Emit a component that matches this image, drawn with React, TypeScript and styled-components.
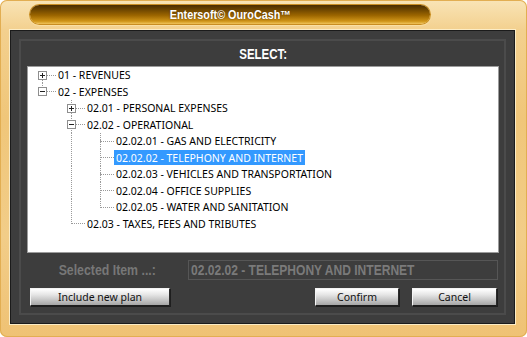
import React from 'react';
import styled, { createGlobalStyle } from 'styled-components';

const GlobalStyle = createGlobalStyle`
  html, body {
    margin: 0;
    padding: 0;
    background: #fff;
  }
`;

const narrow = `"Liberation Sans", Arial, sans-serif`;
const uiFont = `"Noto Sans", "Open Sans", sans-serif`;

const Frame = styled.div`
  width: 527px;
  height: 337px;
  box-sizing: border-box;
  border-radius: 7px;
  padding: 0 12px 13px 10px;
  display: flex;
  flex-direction: column;
  background: linear-gradient(
    180deg,
    #f9e4b6 0%,
    #f3d08e 9%,
    #f0c679 35%,
    #f2cd88 70%,
    #efc274 100%
  );
  box-shadow: inset 0 0 0 1px #e2ae52;
`;

const TitleRow = styled.div`
  height: 30px;
  display: flex;
  align-items: flex-start;
  padding: 5px 0 0 20px;
  box-sizing: border-box;
`;

const TitlePill = styled.div`
  width: 400px;
  height: 19px;
  border-radius: 10px;
  display: flex;
  align-items: center;
  justify-content: center;
  background: linear-gradient(
    180deg,
    #4a2c00 0%,
    #6e4600 25%,
    #9c6600 55%,
    #cf9418 85%,
    #f0c35a 100%
  );
  box-shadow: 0 0 0 1px #c98d22, 0 1px 1px 1px #fbe2a6;
  color: #fff;
  font: bold 12px ${narrow};
  text-shadow: 0 0 2px #5a3600;
`;

// the original uses a condensed face; squeeze Arial metrics to match
const Narrow = styled.span<{ $k: number; $left?: boolean }>`
  display: inline-block;
  white-space: nowrap;
  transform: scaleX(${(p) => p.$k});
  transform-origin: ${(p) => (p.$left ? 'left' : 'center')};
`;

const Panel = styled.div`
  flex: 1;
  background: #3d3d3d;
  border: 1px solid #1b1b1b;
  box-shadow: 0 0 0 1px #fbecc6;
  padding: 8px;
  display: flex;
`;

const Inner = styled.div`
  flex: 1;
  border: 2px solid #4b4b4b;
  padding: 0 5px 7px 6px;
  display: flex;
  flex-direction: column;
`;

const Heading = styled.div`
  height: 25px;
  display: flex;
  align-items: center;
  justify-content: center;
  color: #fff;
  font: bold 14px ${narrow};
`;

const TreeBox = styled.div`
  height: 187px;
  box-sizing: border-box;
  background: #fff;
  border: 1px solid #9c9c9c;
`;

const Row = styled.div`
  height: 16px;
  display: flex;
  align-items: center;
  &:nth-child(even) {
    height: 17px;
  }
`;

const dotV = 'repeating-linear-gradient(to bottom, #9a9a9a 0 1px, transparent 1px 2px)';
const dotH = 'repeating-linear-gradient(to right, #9a9a9a 0 1px, transparent 1px 2px)';

type CellProps = { $through?: boolean; $top?: boolean; $bottom?: boolean; $horiz?: boolean };

const lineLayers = (p: CellProps) => {
  const layers: string[] = [];
  if (p.$through) layers.push(`${dotV} 14px 0 / 1px 100% no-repeat`);
  if (p.$top) layers.push(`${dotV} 14px 0 / 1px 9px no-repeat`);
  if (p.$bottom) layers.push(`${dotV} 14px 100% / 1px 9px no-repeat`);
  if (p.$horiz) layers.push(`${dotH} 15px 8px / 14px 1px no-repeat`);
  return layers.length ? layers.join(', ') : 'none';
};

const Cell = styled.div<CellProps>`
  width: 29px;
  height: 100%;
  flex: none;
  display: flex;
  align-items: flex-start;
  padding: 4px 0 0 10px;
  box-sizing: border-box;
  background: ${(p) => lineLayers(p)};
`;

const Label = styled.span<{ $selected?: boolean }>`
  height: 15px;
  display: inline-flex;
  align-items: center;
  padding: 0 2px;
  margin-left: -1px;
  font: 10.5px ${uiFont};
  white-space: nowrap;
  color: ${(p) => (p.$selected ? '#fff' : '#000')};
  background: ${(p) => (p.$selected ? '#3399ff' : 'transparent')};
`;

const Expander = ({ open }: { open: boolean }) => (
  <svg width="9" height="9" viewBox="0 0 9 9" style={{ display: 'block', background: '#fff' }}>
    <rect x="0.5" y="0.5" width="8" height="8" fill="#fff" stroke="#8e8e8e" />
    <path d="M2 4.5h5" stroke="#222" />
    {!open && <path d="M4.5 2v5" stroke="#222" />}
  </svg>
);

const SelectedRow = styled.div`
  margin-top: 7px;
  height: 20px;
  display: flex;
  align-items: stretch;
`;

const FieldLabel = styled.div`
  width: 161px;
  display: flex;
  align-items: center;
  justify-content: center;
  color: #777;
  font: bold 14px ${narrow};
`;

const Field = styled.div`
  flex: 1;
  margin-right: 1px;
  border: 1px solid #565656;
  display: flex;
  align-items: center;
  padding-left: 2px;
  overflow: hidden;
  color: #7a7a7a;
  font: bold 14px ${narrow};
`;

const ButtonRow = styled.div`
  margin-top: 8px;
  display: flex;
  align-items: center;
  padding: 0 2px 0 3px;
`;

const Spacer = styled.div`
  flex: 1;
`;

const Button = styled.button<{ $w: number }>`
  width: ${(p) => p.$w}px;
  height: 18px;
  margin-left: 13px;
  &:first-child {
    margin-left: 0;
  }
  padding: 0;
  border: 1px solid;
  border-color: #f4f4f4 #2a2a2a #1e1e1e #f4f4f4;
  background: linear-gradient(180deg, #ffffff 0%, #e6e6e6 35%, #c4c4c4 70%, #a5a5a5 100%);
  box-shadow: 1px 1px 0 #1e1e1e;
  font: 10.5px ${uiFont};
  color: #111;
`;

type Node = {
  label: string;
  children?: Node[];
  open?: boolean;
  selected?: boolean;
};

const tree: Node[] = [
  { label: '01 - REVENUES', children: [{ label: '' }] },
  {
    label: '02 - EXPENSES',
    open: true,
    children: [
      { label: '02.01 - PERSONAL EXPENSES', children: [{ label: '' }] },
      {
        label: '02.02 - OPERATIONAL',
        open: true,
        children: [
          { label: '02.02.01 - GAS AND ELECTRICITY' },
          { label: '02.02.02 - TELEPHONY AND INTERNET', selected: true },
          { label: '02.02.03 - VEHICLES AND TRANSPORTATION' },
          { label: '02.02.04 - OFFICE SUPPLIES' },
          { label: '02.02.05 - WATER AND SANITATION' },
        ],
      },
      { label: '02.03 - TAXES, FEES AND TRIBUTES' },
    ],
  },
];

type FlatRow = { node: Node; guides: boolean[]; first: boolean; last: boolean; root: boolean };

function flatten(nodes: Node[], guides: boolean[], root: boolean, out: FlatRow[]) {
  nodes.forEach((node, i) => {
    const last = i === nodes.length - 1;
    out.push({ node, guides, first: i === 0, last, root });
    if (node.open && node.children) flatten(node.children, [...guides, !last], false, out);
  });
  return out;
}

const rows = flatten(tree, [], true, []);

const Tree = () => (
  <TreeBox>
    {rows.map((r, idx) => (
      <Row key={idx}>
        {r.guides.map((g, j) => (
          <Cell key={j} $through={g} />
        ))}
        <Cell $top={!(r.root && r.first)} $bottom={!r.last} $horiz>
          {r.node.children && <Expander open={!!r.node.open} />}
        </Cell>
        <Label $selected={r.node.selected}>{r.node.label}</Label>
      </Row>
    ))}
  </TreeBox>
);

const App = () => {
  return (
    <>
      <GlobalStyle />
      <Frame>
        <TitleRow>
          <TitlePill>
            <Narrow $k={0.9}>Entersoft© OuroCash™</Narrow>
          </TitlePill>
        </TitleRow>
        <Panel>
          <Inner>
            <Heading>
              <Narrow $k={0.82}>SELECT:</Narrow>
            </Heading>
            <Tree />
            <SelectedRow>
              <FieldLabel>
                <Narrow $k={0.88}>Selected Item ...:</Narrow>
              </FieldLabel>
              <Field>
                <Narrow $k={0.86} $left>
                  02.02.02 - TELEPHONY AND INTERNET
                </Narrow>
              </Field>
            </SelectedRow>
            <ButtonRow>
              <Button $w={140}>Include new plan</Button>
              <Spacer />
              <Button $w={84}>Confirm</Button>
              <Button $w={85}>Cancel</Button>
            </ButtonRow>
          </Inner>
        </Panel>
      </Frame>
    </>
  );
};

export default App;
